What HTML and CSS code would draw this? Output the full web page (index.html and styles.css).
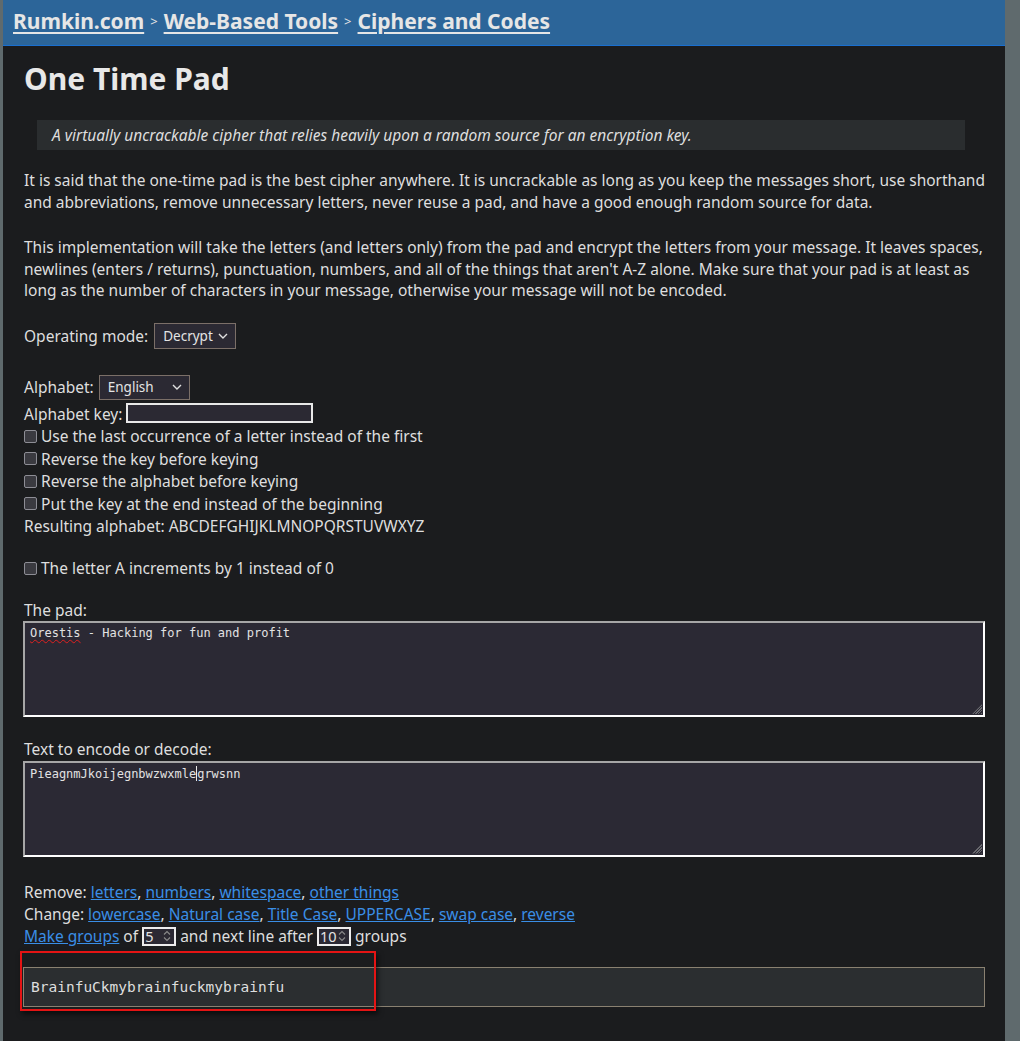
FILE: index.html
```html
<!DOCTYPE html>
<html lang="en">
<head>
<meta charset="utf-8">
<title>One Time Pad</title>
<link rel="stylesheet" href="styles.css">
</head>
<body>
<div class="page">
  <header class="crumbs">
    <a href="#">Rumkin.com</a><span class="sep">&gt;</span><a href="#">Web-Based Tools</a><span class="sep">&gt;</span><a href="#">Ciphers and Codes</a>
  </header>
  <main class="content">
    <h1 class="title">One Time Pad</h1>
    <div class="lede">A virtually uncrackable cipher that relies heavily upon a random source for an encryption key.</div>
    <p class="para p1">It is said that the one-time pad is the best cipher anywhere. It is uncrackable as long as you keep the messages short, use shorthand and abbreviations, remove unnecessary letters, never reuse a pad, and have a good enough random source for data.</p>
    <p class="para p2">This implementation will take the letters (and letters only) from the pad and encrypt the letters from your message. It leaves spaces, newlines (enters / returns), punctuation, numbers, and all of the things that aren't A-Z alone. Make sure that your pad is at least as long as the number of characters in your message, otherwise your message will not be encoded.</p>

    <div class="row mode-row">
      <span>Operating mode:</span>
      <span class="select select-mode"><span class="sel-text">Decrypt</span><svg class="chev" width="10" height="6" viewBox="0 0 10 6"><path d="M1 1l4 4 4-4" fill="none" stroke="#e0e0e0" stroke-width="1.4"/></svg></span>
    </div>

    <div class="row alpha-row">
      <span>Alphabet:</span>
      <span class="select select-alpha"><span class="sel-text">English</span><svg class="chev" width="10" height="6" viewBox="0 0 10 6"><path d="M1 1l4 4 4-4" fill="none" stroke="#e0e0e0" stroke-width="1.4"/></svg></span>
    </div>
    <div class="line key-row">Alphabet key: <span class="keybox"></span></div>
    <div class="line"><span class="cb"></span>Use the last occurrence of a letter instead of the first</div>
    <div class="line"><span class="cb"></span>Reverse the key before keying</div>
    <div class="line"><span class="cb"></span>Reverse the alphabet before keying</div>
    <div class="line"><span class="cb"></span>Put the key at the end instead of the beginning</div>
    <div class="line">Resulting alphabet: ABCDEFGHIJKLMNOPQRSTUVWXYZ</div>

    <div class="line letter-a"><span class="cb"></span>The letter A increments by 1 instead of 0</div>

    <div class="line field-label pad-label">The pad:</div>
    <div class="area"><span class="squiggle">Orestis</span> - Hacking for fun and profit<span class="grip"></span></div>

    <div class="line field-label text-label">Text to encode or decode:</div>
    <div class="area area-text">PieagnmJkoijegnbwzwxmle<span class="caret"></span>grwsnn<span class="grip"></span></div>

    <div class="line tools-first">Remove: <a href="#">letters</a>, <a href="#">numbers</a>, <a href="#">whitespace</a>, <a href="#">other things</a></div>
    <div class="line">Change: <a href="#">lowercase</a>, <a href="#">Natural case</a>, <a href="#">Title Case</a>, <a href="#">UPPERCASE</a>, <a href="#">swap case</a>, <a href="#">reverse</a></div>
    <div class="line"><a href="#">Make groups</a> of <span class="num">5<svg class="spin" width="8" height="12" viewBox="0 0 8 12"><path d="M1 4.5l3-3 3 3M1 7.5l3 3 3-3" fill="none" stroke="#8a8a8a" stroke-width="1.1"/></svg></span> and next line after <span class="num">10<svg class="spin" width="8" height="12" viewBox="0 0 8 12"><path d="M1 4.5l3-3 3 3M1 7.5l3 3 3-3" fill="none" stroke="#8a8a8a" stroke-width="1.1"/></svg></span> groups</div>

    <div class="output-wrap">
      <div class="output">BrainfuCkmybrainfuckmybrainfu</div>
      <div class="mark"></div>
    </div>
  </main>
</div>
</body>
</html>
```

FILE: styles.css
```css
html, body {
  margin: 0;
  padding: 0;
}
body {
  background: #5f6a6d;
  font-family: "Noto Sans", "Open Sans", sans-serif;
  font-size: 15.5px;
  color: #dedede;
}
.page {
  width: 1002px;
  margin-left: 3px;
  background: #1b1c1e;
  min-height: 1041px;
}
.crumbs {
  background: #2c6599;
  border-bottom: 1px solid #1a6fd0;
  box-sizing: border-box;
  height: 46px;
  padding: 0 0 4px 10px;
  display: flex;
  align-items: center;
  font-size: 21px;
  font-weight: 700;
}
.crumbs a {
  color: #e6e6e6;
  text-decoration: underline;
  text-decoration-thickness: 2px;
  text-underline-offset: 3px;
}
.crumbs .sep {
  font-size: 13px;
  font-weight: 400;
  color: #e6e6e6;
  margin: 0 6px;
}
.content {
  padding: 0 20px;
  position: relative;
}
.title {
  margin: 15px 0 0 1px;
  font-size: 30px;
  line-height: 36px;
  font-weight: 700;
  color: #e8e8e8;
}
.lede {
  margin: 23px 20px 0 14px;
  height: 30px;
  line-height: 30px;
  padding: 0 15px;
  background: #2a2d2f;
  font-style: italic;
  color: #dedede;
}
.para {
  margin: 0;
  line-height: 21.5px;
  padding-left: 1px;
}
.p1 { margin-top: 20px; }
.p2 { margin-top: 24px; }
.row {
  display: flex;
  align-items: center;
  gap: 6px;
  padding-left: 1px;
}
.mode-row { margin-top: 21px; }
.alpha-row { margin-top: 26px; gap: 5px; }
.select {
  display: inline-flex;
  align-items: center;
  justify-content: space-between;
  box-sizing: border-box;
  border: 1px solid #7b6f68;
  background: #2b2933;
  font-size: 13.5px;
  color: #e4e4e4;
  padding: 0 7px 0 8px;
}
.select-mode { width: 82px; height: 26px; }
.select-alpha { width: 91px; height: 25px; }
.line {
  line-height: 22.4px;
  padding-left: 1px;
}
.key-row { margin-top: 3px; }
.keybox {
  display: inline-block;
  vertical-align: middle;
  width: 187px;
  height: 20px;
  box-sizing: border-box;
  border: 2px solid #e8e8e8;
  background: #2b2933;
  position: relative;
  top: -2px;
}
.cb {
  display: inline-block;
  vertical-align: middle;
  position: relative;
  top: -2px;
  width: 13px;
  height: 13px;
  box-sizing: border-box;
  border: 1px solid #8d8d95;
  border-radius: 2px;
  background: #3a3a40;
  margin-right: 4px;
}
.letter-a { margin-top: 20px; }
.pad-label { margin-top: 19px; }
.text-label { margin-top: 21px; }
.area {
  position: relative;
  box-sizing: border-box;
  height: 96px;
  margin-top: 0;
  border: 2px solid #ffffff;
  border-top-color: #a6a6a6;
  border-left-color: #a6a6a6;
  background: #2b2934;
  font-family: "DejaVu Sans Mono", monospace;
  font-size: 12px;
  line-height: 14px;
  padding: 3px 5px;
  color: #e2e2e2;
}
.squiggle {
  text-decoration: underline wavy #e02020;
  text-decoration-thickness: 1px;
  text-underline-offset: 2px;
}
.caret {
  display: inline-block;
  width: 1px;
  height: 15px;
  background: #e8e8e8;
  vertical-align: -3px;
}
.grip {
  position: absolute;
  right: 1px;
  bottom: 1px;
  width: 10px;
  height: 10px;
  background: repeating-linear-gradient(135deg, transparent 0 1px, #6b6b70 1px 2px);
  clip-path: polygon(100% 0, 100% 100%, 0 100%);
}
.tools-first { margin-top: 24px; }
.content a {
  color: #3a8ee6;
  text-decoration: underline;
}
.num {
  display: inline-flex;
  vertical-align: middle;
  position: relative;
  top: -2px;
  align-items: center;
  justify-content: space-between;
  box-sizing: border-box;
  width: 34px;
  height: 19px;
  border: 2px solid #ececec;
  background: #2b2933;
  font-size: 14.5px;
  line-height: 15px;
  padding: 0 3px 0 1px;
  color: #e4e4e4;
}
.output-wrap {
  position: relative;
  margin-top: 19px;
}
.output {
  box-sizing: border-box;
  height: 40px;
  border: 1px solid #8a8171;
  background: #2b2e30;
  font-family: "DejaVu Sans Mono", monospace;
  font-size: 14.5px;
  line-height: 38px;
  padding-left: 7px;
  color: #dedede;
}
.mark {
  position: absolute;
  left: -3px;
  top: -16px;
  width: 356px;
  height: 60px;
  box-sizing: border-box;
  border: 2px solid #e41414;
  box-shadow: 2px 3px 5px rgba(0,0,0,0.6);
}
```
